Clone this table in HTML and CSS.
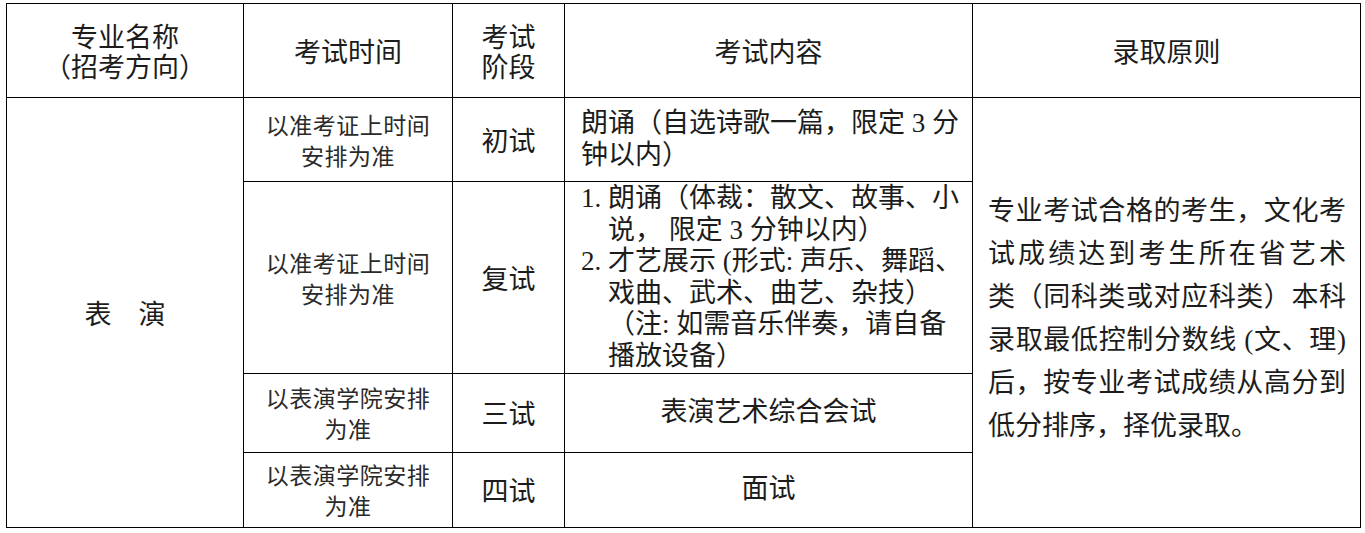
FILE: index.html
```html
<!DOCTYPE html>
<html lang="zh-CN">
<head>
<meta charset="utf-8">
<title>表演专业考试安排</title>
<link rel="stylesheet" href="styles.css">
</head>
<body>
<table class="plan">
  <colgroup>
    <col class="c1"><col class="c2"><col class="c3"><col class="c4"><col class="c5">
  </colgroup>
  <thead>
    <tr class="r-head">
      <th><span class="hl">专业名称</span><span class="hl">（招考方向）</span></th>
      <th>考试时间</th>
      <th><span class="hl">考试</span><span class="hl">阶段</span></th>
      <th>考试内容</th>
      <th>录取原则</th>
    </tr>
  </thead>
  <tbody>
    <tr class="r1">
      <td class="major" rowspan="4">表　演</td>
      <td class="time">以准考证上时间<br>安排为准</td>
      <td class="stage">初试</td>
      <td class="content"><span class="line">朗诵（自选诗歌一篇，限定 3 分</span><span class="line">钟以内）</span></td>
      <td class="rule" rowspan="4">
        <span class="jl">专业考试合格的考生，文化考</span>
        <span class="jl">试成绩达到考生所在省艺术</span>
        <span class="jl">类（同科类或对应科类）本科</span>
        <span class="jl">录取最低控制分数线 (文、理)</span>
        <span class="jl">后，按专业考试成绩从高分到</span>
        <span class="last">低分排序，择优录取。</span>
      </td>
    </tr>
    <tr class="r2">
      <td class="time">以准考证上时间<br>安排为准</td>
      <td class="stage">复试</td>
      <td class="content">
        <span class="line">1. 朗诵（体裁：散文、故事、小</span>
        <span class="line ind">说， 限定 3 分钟以内）</span>
        <span class="line">2. 才艺展示 (形式: 声乐、舞蹈、</span>
        <span class="line ind">戏曲、武术、曲艺、杂技）</span>
        <span class="line ind">（注: 如需音乐伴奏，请自备</span>
        <span class="line ind">播放设备）</span>
      </td>
    </tr>
    <tr class="r3">
      <td class="time">以表演学院安排<br>为准</td>
      <td class="stage">三试</td>
      <td class="content center">表演艺术综合会试</td>
    </tr>
    <tr class="r4">
      <td class="time">以表演学院安排<br>为准</td>
      <td class="stage">四试</td>
      <td class="content center">面试</td>
    </tr>
  </tbody>
</table>
</body>
</html>
```

FILE: styles.css
```css
html, body {
  margin: 0;
  padding: 0;
  background: #ffffff;
}

body {
  padding: 3px 0 0 6px;
  color: #1c1c1c;
  font-family: "Liberation Serif", "Noto Sans CJK SC", serif;
}

.plan {
  border-collapse: collapse;
  table-layout: fixed;
  width: 1354px;
}

.c1 { width: 237px; }
.c2 { width: 209px; }
.c3 { width: 112px; }
.c4 { width: 408px; }
.c5 { width: 388px; }

.plan th,
.plan td {
  border: 1px solid #000;
  padding: 0;
  vertical-align: middle;
  text-align: center;
}

.plan th {
  font-family: "Noto Sans CJK SC", sans-serif;
  font-weight: normal;
  font-size: 27px;
  line-height: 30px;
}

.hl {
  display: block;
}

.r-head { height: 94px; }
.r1 { height: 84px; }
.r2 { height: 192px; }
.r3 { height: 79px; }
.r4 { height: 75px; }

.plan .major {
  font-family: "Noto Sans CJK SC", sans-serif;
  font-size: 27px;
  line-height: 32px;
}

.plan .time {
  font-family: "Noto Sans CJK SC", sans-serif;
  font-size: 23px;
  line-height: 31px;
  letter-spacing: 0.5px;
  color: #2a2a2a;
}

.plan .stage {
  font-family: "Noto Sans CJK SC", sans-serif;
  font-size: 27px;
  line-height: 32px;
}

.plan .content {
  font-size: 27px;
  line-height: 31.5px;
  text-align: left;
  padding: 0 6px 0 16px;
  white-space: nowrap;
}

.plan .content.center {
  text-align: center;
  padding: 0;
}

.line {
  display: block;
}

.ind {
  padding-left: 27px;
}

.plan .rule {
  font-size: 27px;
  line-height: 43px;
  text-align: left;
  padding: 12px 14px 0 15px;
  white-space: nowrap;
}

.jl {
  display: block;
  text-align: justify;
  text-align-last: justify;
}

.last {
  display: block;
  text-align: left;
}
```
